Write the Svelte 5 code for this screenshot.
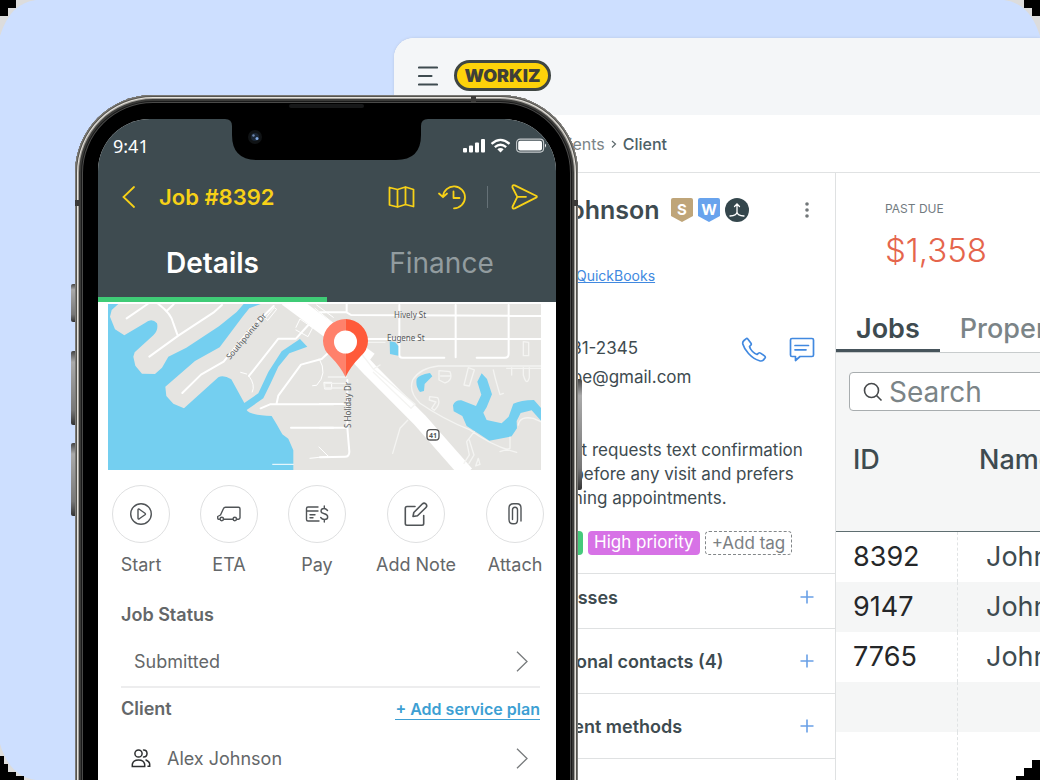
<script>
  const jobs = [
    { id: '8392', name: 'John Smith' },
    { id: '9147', name: 'John Smith' },
    { id: '7765', name: 'John Smith' },
    { id: '', name: '' },
    { id: '', name: '' }
  ];
  const sections = ['Addresses', 'Additional contacts (4)', 'Payment methods'];
  const actions = ['Start', 'ETA', 'Pay', 'Add Note', 'Attach'];
</script>

<div class="stage">
  <main class="window">
    <header class="topbar">
      <button class="plain" aria-label="Menu">
        <svg width="20" height="20" viewBox="0 0 20 20" fill="none" stroke="#3e4b50" stroke-width="2.1" stroke-linecap="round"><path d="M1 1.5H19M1 10H13.500M1 18.500H19" /></svg>
      </button>
      <span class="logo">WORKIZ</span>
    </header>
    <nav class="crumbs" aria-label="Breadcrumb">
      <a href="#clients">Clients</a>
      <svg width="6" height="10" viewBox="0 0 6 10" fill="none" stroke="#5d696d" stroke-width="1.2"><path d="M1 2L4.500 5L1 8.500" /></svg>
      <b>Client</b>
    </nav>
    <div class="columns">
      <section class="client">
        <div class="name">
          <h1>Johnson</h1>
          <svg width="78" height="24" viewBox="0 0 78 24">
            <path d="M2 0H20Q22 0 22 2V18L11 24L0 18V2Q0 0 2 0Z" fill="#bfa579" />
            <path d="M29 0H47Q49 0 49 2V18L38 24L27 18V2Q27 0 29 0Z" fill="#68a3ed" />
            <circle cx="66" cy="12" r="12" fill="#34464c" />
            <path d="M66 7V14Q66 17.500 59 18M66 14Q66 17.500 73 18M63.500 8.500L66 6L68.500 8.500" fill="none" stroke="#fff" stroke-width="1.3" stroke-linecap="round" />
            <text x="11" y="16.500" text-anchor="middle">S</text>
            <text x="38" y="16.500" text-anchor="middle">W</text>
          </svg>
          <button class="plain more" aria-label="More options">
            <svg width="6" height="16" viewBox="0 0 6 16" fill="#727779"><circle cx="3" cy="2" r="1.800" /><circle cx="3" cy="8" r="1.800" /><circle cx="3" cy="14" r="1.800" /></svg>
          </button>
        </div>
        <a class="books" href="#quickbooks">QuickBooks</a>
        <div class="contact">
          <div class="lines">
            <span>555 231-2345</span>
            <span class="mail">joe@gmail.com</span>
          </div>
          <button class="plain" aria-label="Call">
            <svg width="26" height="26" viewBox="0 0 26 26" fill="none" stroke="#4189e0" stroke-width="1.700" stroke-linejoin="round"><path d="M3 3.500L5 1.800Q6 1 7 2.200L10 6.300Q10.700 7.300 9.800 8.200L8.500 9.500Q9 12 11.500 14.500Q14 17 16 17.500L17.600 16.100Q18.500 15.400 19.500 16.100L23.500 18.900Q24.800 19.900 24 21L22.500 22.900Q21 24.500 18.500 23.800Q12.500 22 7.500 16.500Q3 11.500 1.800 7Q1.300 5 3 3.500Z" /></svg>
          </button>
          <button class="plain" aria-label="Message">
            <svg width="26" height="26" viewBox="0 0 26 26" fill="none" stroke="#4189e0" stroke-width="1.700" stroke-linejoin="round" stroke-linecap="round"><path d="M3 1.500H23Q24.500 1.500 24.500 3V18Q24.500 19.500 23 19.500H11L6.500 23.500V19.500H3Q1.500 19.500 1.500 18V3Q1.500 1.500 3 1.500ZM6 8.500H19.500M6 12.800H17" /></svg>
          </button>
        </div>
        <p class="note">Client requests text confirmation<br />call before any visit and prefers<br />morning appointments.</p>
        <div class="tags">
          <span class="tag green">VIP</span>
          <span class="tag pink">High priority</span>
          <button class="tag add">+Add tag</button>
        </div>
        {#each sections as title}
          <div class="fold">
            <h2>{title}</h2>
            <button class="plain" aria-label="Add to {title}">
              <svg width="14" height="14" viewBox="0 0 14 14" stroke="#69a0e6" stroke-width="1.600"><path d="M7 .5V13.500M.5 7H13.500" /></svg>
            </button>
          </div>
        {/each}
      </section>

      <section class="work">
        <div class="due">
          <small>PAST DUE</small>
          <span>$1,358</span>
        </div>
        <div class="tabs">
          <button class="on">Jobs</button>
          <button>Properties</button>
        </div>
        <div class="sheet">
          <label class="search">
            <svg width="20" height="20" viewBox="0 0 20 20" fill="none" stroke="#46494b" stroke-width="1.600"><circle cx="8.500" cy="8.500" r="7" /><path d="M13.500 13.500L18.500 18.500" /></svg>
            <input type="search" placeholder="Search" aria-label="Search jobs" />
          </label>
          <table>
            <thead><tr><th>ID</th><th>Name</th></tr></thead>
            <tbody>
              {#each jobs as job}
                <tr><td>{job.id}</td><td>{job.name}</td></tr>
              {/each}
            </tbody>
          </table>
        </div>
      </section>
    </div>
  </main>

  <div class="phone">
    <i class="key k1"></i><i class="key k2"></i><i class="key k3"></i><i class="key k4"></i>
    <i class="band b1"></i><i class="band b2"></i><i class="band b3"></i>
    <div class="shell">
      <i class="speaker"></i>
      <div class="screen">
        <svg class="notch" width="204" height="42" viewBox="0 0 204 42">
          <path d="M0 0Q7 0 7 7V16Q7 41 32 41H171Q196 41 196 16V7Q196 0 203 0Z" fill="#000" />
          <circle cx="30" cy="18" r="7" fill="#101315" />
          <circle cx="30" cy="18" r="4" fill="#1b2736" />
          <circle cx="28.500" cy="16.500" r="1.200" fill="#6c86ae" /><circle cx="32" cy="19.500" r="1.500" fill="#7fa6e0" />
        </svg>
        <div class="head">
          <div class="status">
            <span>9:41</span>
            <svg width="84" height="16" viewBox="0 0 84 16" fill="#fff">
              <rect x="0" y="10" width="4" height="4.500" rx="1" /><rect x="6" y="7.500" width="4" height="7" rx="1" /><rect x="12" y="4.500" width="4" height="10" rx="1" /><rect x="18" y="1" width="4" height="13.500" rx="1" />
              <g fill="none" stroke="#fff" stroke-width="2.300"><path d="M28.500 5.800Q37.500-2 46.500 5.800" /><path d="M31.800 9.200Q37.500 4.300 43.200 9.200" /></g>
              <path d="M34.300 11.200Q37.500 8.600 40.700 11.200L37.500 14.500Z" />
              <rect x="53.600" y="1.100" width="27" height="13" rx="3.500" fill="none" stroke="#c5cacc" stroke-width="1.100" />
              <rect x="55.200" y="2.700" width="23.800" height="9.800" rx="2" /><path d="M82 5.500Q84 7.500 82 9.700Z" />
            </svg>
          </div>
          <div class="title">
            <button class="plain" aria-label="Back"><svg width="13" height="22" viewBox="0 0 13 22" fill="none" stroke="#f7d117" stroke-width="1.800" stroke-linecap="round"><path d="M12 1L1.500 11L12 21" /></svg></button>
            <h1>Job #8392</h1>
            <button class="plain" aria-label="Map"><svg width="27" height="24" viewBox="0 0 27 24" fill="none" stroke="#f7d117" stroke-width="1.800" stroke-linejoin="round"><path d="M1.500 2.500L9.500 4.500V22L1.500 20ZM9.500 4.500L17.500 2V19.500L9.500 22M17.500 2L25.500 4.500V21.500L17.500 19.500" /></svg></button>
            <button class="plain" aria-label="History"><svg width="28" height="26" viewBox="0 0 28 26" fill="none" stroke="#f7d117" stroke-width="1.800" stroke-linecap="round" stroke-linejoin="round"><path d="M5 12.500A11 11 0 1 1 16 24.300M1 9.500L5 13.200L9 9.500M15.500 7.500V14H21.500" /></svg></button>
            <i class="bar"></i>
            <button class="plain" aria-label="Send"><svg width="27" height="26" viewBox="0 0 27 26" fill="none" stroke="#f7d117" stroke-width="1.800" stroke-linecap="round" stroke-linejoin="round"><path d="M1.500 3.500Q1 .5 3.800 1.400L25.500 12Q26.300 12.700 25.500 13.400L3.800 24.400Q1 25 1.600 22.500L6.300 12.800ZM6.300 12.800H15" /></svg></button>
          </div>
          <div class="ptabs"><button class="on">Details</button><button>Finance</button></div>
        </div>

        <svg class="map" viewBox="0 0 433 166" role="img" aria-label="Map of the job address">
          <rect width="433" height="166" fill="#e5e4e1" />
          <g transform="translate(-8 -9) scale(.3333)" fill="none" stroke="#fff" stroke-linecap="round" stroke-linejoin="round">
            <path stroke="none" fill="#74cff0" d="M24 27H55L35 45L30 65L45 103L73 121L135 84Q155 67 171 85Q176 105 160 121L104 172L100 185L106 212L126 236L165 237L186 218L205 185L259 158L357 94L410 51L431 27H482L448 40L427 66L359 157L285 198L196 275L199 303L220 326L252 340L355 247Q370 238 394 253L433 324L475 295L505 231L545 169L600 132L622 155L568 175L535 215L511 267L490 310L440 345Q446 360 515 363L530 388L547 418L565 431L580 466V527H24Z" />
            <path stroke-width="6" d="M80 70L143 27M175 27Q214 56 220 85L233 121M200 48L221 28M148 185L235 122L340 53L366 30M247 294L303 239L371 200L450 103L521 33M625 90L588 131H535L447 243M482 340L510 328H700M530 325L535 302L603 209L665 192L700 160M573 398H700" />
            <path stroke-width="3" d="M447 243Q467 270 457 291M440 237L422 232M518 508H580M630 490L685 484L657 456M658 192Q684 236 650 271L638 272M673 262H695V282H675ZM497 69L523 38L530 43L504 75ZM588 97L600 72L638 98L624 125L588 105M645 40L700 85M650 30L700 67" />
            <path stroke="#fff" stroke-width="47" stroke-linecap="butt" d="M560 10L810 195" />
          </g>
          <g transform="translate(212 -9) scale(.3333)" fill="none" stroke="#fff" stroke-linecap="round" stroke-linejoin="round">
            <path stroke-width="43" stroke-linecap="butt" d="M-20 75L75 145L150 225L300 376L440 535" />
            <path stroke-width="6" d="M80 27V52L93 60L663 63M90 132H663M238 30V180Q238 188 247 188H373M407 30V187M566 30V177Q566 188 555 188H470M0 52H80M0 327H80M0 398H82M82 255V398L88 470Q88 485 75 485L0 487" />
            <path stroke-width="4" stroke="#f4f4f2" d="M663 213H355Q300 219 278 255Q265 290 300 325Q370 373 450 405Q520 455 590 472M663 220H560M103 149L160 222L285 328L273 340L160 232M160 222L180 210M100 142H195M445 218L432 270L448 273L463 225ZM520 225Q525 250 540 299L550 295M575 218V240M610 218V240Q620 275 628 248V218M610 140V182H626V142ZM357 227L390 230Q400 255 375 264L357 255ZM362 243H390M329 305L353 308Q364 325 343 346L335 340L348 321L328 315ZM263 376L240 400L218 475M570 425V460L540 470M595 390Q600 362 640 370L663 380M463 410L440 440L448 480L432 505M448 435L462 480L447 505M475 490L467 513L480 508ZM14 265H80V279H14ZM25 246H80" />
            <path stroke="none" fill="#74cff0" d="M209 139L226 142L235 153V182L210 177ZM290 252Q296 240 330 234L337 244L314 267L312 288L300 291Q286 275 290 252ZM399 331Q405 315 424 316L468 333L484 299L472 260L485 235L501 252L516 298L500 337L490 353L500 375L545 385L566 365L580 326Q602 316 642 315L663 339V377L635 346L602 354L590 378L591 400L575 424L508 437L482 420L440 393L427 363L401 349Z" />
            <rect x="321" y="404" width="36" height="31" rx="10" fill="#fff" stroke="#555" stroke-width="4" />
          </g>
          <g font-family="'Noto Sans', sans-serif" font-size="8" fill="#55585a">
            <text x="286" y="14">Hively St</text><text x="279" y="37">Eugene St</text>
            <text transform="translate(122 56) rotate(-50)">Southpointe Dr</text>
            <text transform="translate(243 124) rotate(-90)">S Holiday Dr</text>
            <text x="325" y="134" font-size="7" font-weight="700" text-anchor="middle">41</text>
          </g>
          <path d="M237.500 15V73Q232 62 223 53Q215 46 215 37A22.500 22.500 0 0 1 237.500 15Z" fill="#ff816b" />
          <path d="M237.500 15A22.500 22.500 0 0 1 260 37Q260 46 252 53Q243 62 237.500 73Z" fill="#ff5a3a" />
          <circle cx="237.500" cy="38" r="11.500" fill="#fff" />
        </svg>

        <div class="actions">
          {#each actions as label, i}
            <button>
              <span class="ring">
                <svg width="26" height="26" viewBox="0 0 26 26" fill="none" stroke="#505457" stroke-width="1.400" stroke-linejoin="round" stroke-linecap="round">
                  {#if i === 0}
                    <circle cx="13" cy="13" r="10.300" /><path d="M10 9Q10 7.500 11.300 8.200L17 12.200Q18 13 17 13.800L11.300 17.800Q10 18.500 10 17Z" />
                  {:else if i === 1}
                    <path d="M3.500 18.200H2.500Q1.700 18.200 1.700 17.200V15.500L4.500 14L7.500 7.500Q8 6.300 9.500 6.300H22.500Q24 6.300 24 7.800V16.800Q24 18.200 22.500 18.200H21M7.500 18.200H17" /><circle cx="5.800" cy="18" r="1.700" /><circle cx="18.800" cy="18" r="1.700" />
                  {:else if i === 2}
                    <path d="M14 6H4Q2.500 6 2.500 7.500V18.500Q2.500 20 4 20H15M2.500 10H14M6 13.800H11M6 16.800H9M23.500 9.500Q22 7.500 20 7.500Q17 7.500 17 10Q17 12 20.300 12.700Q23.700 13.400 23.700 16Q23.700 18.500 20.500 18.500Q18 18.500 16.700 16.500M20.300 5V7.500M20.300 18.500V21" />
                  {:else if i === 3}
                    <path stroke-width="1.600" d="M12 5.500H4Q2.300 5.500 2.300 7.200V22.500Q2.300 24.200 4 24.200H19Q20.700 24.200 20.700 22.500V14.500M10 15.500L10.800 11.500L19.500 2.800Q21 1.400 23 3Q24.500 5 23 6.500L14.500 14.800Z" />
                  {:else}
                    <path d="M19 20V7Q19 2.700 15 2.700H11.500Q7 2.700 7 7V18.500Q7 22.800 11 22.800H12Q15.500 22.800 15.500 19V9Q15.500 6.200 13 6.200Q10.500 6.200 10.500 9V18.500" />
                  {/if}
                </svg>
              </span>
              {label}
            </button>
          {/each}
        </div>

        <div class="details">
          <h2>Job Status</h2>
          <button class="entry"><span>Submitted</span><svg width="12" height="21" viewBox="0 0 12 21" fill="none" stroke="#777a7c" stroke-width="1.300"><path d="M1 .8L11 10.500L1 20.200" /></svg></button>
          <div class="pair"><h2>Client</h2><a href="#plan">+ Add service plan</a></div>
          <button class="entry person">
            <svg width="20" height="20" viewBox="0 0 20 20" fill="none" stroke="#2d2f30" stroke-width="1.500" stroke-linecap="round"><circle cx="7.500" cy="5.500" r="3.600" /><path d="M1.300 18.500V16.500Q2 12 7.500 12Q13 12 13.700 16.500V18.500ZM12.500 2Q16 2 16 5.500Q16 9 12.500 9M15 12Q18.700 13.500 18.700 16.500V18.300H17" /></svg>
            <span>Alex Johnson</span>
            <svg width="12" height="21" viewBox="0 0 12 21" fill="none" stroke="#777a7c" stroke-width="1.300"><path d="M1 .8L11 10.500L1 20.200" /></svg>
          </button>
        </div>
      </div>
    </div>
  </div>

  <svg class="corner tl" width="36" height="36" viewBox="0 0 36 36"><path d="M0 0H36Q10 3 0 36Z" fill="#dcdcdc" /><path d="M0 0H16V8H8V16H0Z" fill="#000" /></svg>
  <svg class="corner tr" width="36" height="36" viewBox="0 0 36 36"><path d="M0 0H36Q10 3 0 36Z" fill="#dcdcdc" /><path d="M0 0H16V8H8V16H0Z" fill="#000" /></svg>
  <svg class="corner bl" width="36" height="36" viewBox="0 0 36 36"><path d="M0 0H36Q10 3 0 36Z" fill="#dcdcdc" /><path d="M0 0H24V4H16V8H8V16H4V24H0Z" fill="#000" /></svg>
  <svg class="corner br" width="24" height="20" viewBox="0 0 24 20"><path d="M0 0H24V4H16V12H8V20H0Z" fill="#000" /></svg>
</div>

<style>
  :global(body) { margin: 0; }
  .stage, .stage * { box-sizing: border-box; }
  .stage { position: relative; height: 100vh; overflow: hidden; padding: 38px 0 0 394px; background: #cddfff; font-family: Inter, sans-serif; color: #3e4b50; }
  button { font: inherit; color: inherit; background: none; border: 0; padding: 0; }
  .plain { display: flex; }
  svg { flex: none; display: block; }
  h1, h2, p { margin: 0; }

  .window { display: flex; flex-direction: column; min-height: 100%; background: #fff; border-radius: 20px 0 0 0; overflow: hidden; box-shadow: 0 0 3px #b8c6df; }
  .topbar { display: flex; align-items: center; gap: 16px; height: 77px; padding: 0 24px 2px; background: #f4f6f8; }
  .logo { display: grid; place-items: center; width: 97px; height: 31px; border: 3px solid #3f4643; border-radius: 16px; background: #fdd20a; color: #3f4038; font-weight: 900; font-size: 18px; }
  .crumbs { display: flex; align-items: center; gap: 6px; height: 58px; padding-left: 159px; border-bottom: 1px solid #e0e2e3; font-size: 16px; }
  .crumbs a { color: #7b8487; text-decoration: none; }
  .crumbs b { font-weight: 500; color: #4d6066; }
  .columns { display: flex; flex: 1; white-space: nowrap; }

  .client { flex: 0 0 442px; border-right: 1px solid #dfe1e2; }
  .name { display: flex; align-items: center; gap: 11px; height: 74px; padding: 0 25px 0 161px; }
  .name h1 { font-size: 25px; font-weight: 600; }
  .name text { font-size: 15px; font-weight: 700; fill: #fff; }
  .more { margin-left: auto; }
  .books { display: block; padding-left: 182px; font-size: 14px; line-height: 58px; color: #4189e0; }
  .contact { display: flex; align-items: center; gap: 22px; height: 90px; padding: 0 20px 0 131px; font-size: 17px; }
  .lines { display: flex; flex-direction: column; flex: 1; padding-top: 26px; line-height: 29px; }
  .mail { padding-left: 43px; }
  .note { padding: 43px 0 21px 147px; font-size: 17px; line-height: 24px; }
  .tags { display: flex; gap: 5px; padding-left: 140px; height: 42px; }
  .tag { height: 24px; line-height: 22px; padding: 0 6px; border-radius: 4px; font-size: 17px; color: #fff; }
  .green { width: 49px; background: #46ca7b; }
  .pink { background: #d772e6; }
  .add { border: 1px dashed #838789; color: #7b8083; line-height: 20px; }
  .fold { display: flex; align-items: center; justify-content: space-between; height: 65px; padding: 0 21px 0 131px; border-bottom: 1px solid #dfe1e2; }
  .tags + .fold { height: 56px; padding-bottom: 8px; border-top: 1px solid #dfe1e2; }
  .fold h2 { font-size: 18px; font-weight: 600; }

  .work { display: flex; flex-direction: column; flex: 1; min-width: 0; overflow: hidden; }
  .due { display: flex; flex-direction: column; height: 132px; padding: 27px 0 0 49px; }
  .due small { font-size: 12px; line-height: 18px; color: #727b7f; }
  .due span { margin-top: 12px; font-size: 33px; font-weight: 300; line-height: 40px; color: #e5654c; }
  .tabs { display: flex; height: 48px; border-bottom: 1px solid #c8cccd; }
  .tabs button { flex: none; padding: 0 20px; font-size: 27px; font-weight: 500; color: #7b8487; }
  .tabs .on { font-weight: 600; color: #3e4b50; box-shadow: inset 0 -3px #46545b; }
  .sheet { display: flex; flex-direction: column; flex: 1; padding-top: 19px; background: #f5f6f6; }
  .search { display: flex; align-items: center; gap: 6px; flex: none; height: 39px; margin: 0 -8px 0 13px; padding: 0 13px; background: #fff; border: 1px solid #a8adaf; border-radius: 4px; }
  .search input { flex: 1; min-width: 0; border: 0; padding: 0; background: none; font: 28px/36px Inter, sans-serif; color: #7b8487; outline: 0; }
  .search input::placeholder { color: #7b8487; opacity: 1; }
  table { flex: none; border-collapse: separate; border-spacing: 0; table-layout: fixed; width: 260px; text-align: left; font-size: 27px; }
  th { height: 121px; padding: 0 0 24px 17px; font-weight: 500; border-bottom: 1px solid #5f6e71; }
  th + th { padding-left: 21px; }
  th:first-child { width: 122px; }
  td { height: 50px; padding: 0 0 2px 17px; background: #fff; border-right: 1px dashed #e0e3e4; }
  td:first-child { color: #252729; }
  td + td { padding-left: 28px; }
  tbody tr:nth-child(even) td { background: #f5f6f6; }
  tbody tr:last-child td { height: 90px; }

  .phone { position: absolute; left: 75px; top: 95px; bottom: -16px; width: 503px; }
  .shell { position: relative; height: 100%; padding: 24px 22px 0 23px; border-radius: 78px 78px 0 0; background: #000; box-shadow: inset 0 0 0 1px #7b7a77, inset 0 0 0 2px #55544f, inset 0 0 0 3px #e6e3dd, inset 0 0 0 4px #a09e99, inset 0 0 0 6px #3b3b39, inset 0 0 0 7px #1a1a1a, inset 0 0 0 8px #4a4a49; }
  .speaker { position: absolute; left: 214px; right: 214px; top: 9px; height: 4px; border-radius: 2px; background: #171819; }
  .key { position: absolute; left: -4px; width: 5px; border-radius: 2px 0 0 2px; background: linear-gradient(#444, #aaa 15%, #777 80%, #333); }
  .k1 { top: 189px; height: 38px; }
  .k2 { top: 256px; height: 74px; }
  .k3 { top: 348px; height: 73px; }
  .k4 { left: auto; right: -4px; top: 284px; height: 111px; border-radius: 0 2px 2px 0; }
  .band { position: absolute; z-index: 1; width: 5px; height: 6px; background: #3b3a38; }
  .b1 { left: 0; top: 105px; }
  .b2 { right: 0; top: 105px; }
  .b3 { right: 102px; top: 1px; }
  .screen { position: relative; height: 100%; overflow: hidden; background: #fff; border-radius: 52px 52px 0 0; color: #646769; white-space: nowrap; }
  .notch { position: absolute; left: 127px; top: 0; }
  .head { height: 183px; background: #3e4b50; }
  .status { display: flex; align-items: center; justify-content: space-between; height: 54px; padding: 0 9px 0 15px; color: #fff; font: 18px "Noto Sans", sans-serif; }
  .title { display: flex; align-items: center; height: 48px; padding: 0 18px 0 24px; }
  .title h1 { flex: 1; padding-left: 24px; font-size: 22px; font-weight: 600; color: #f7d117; }
  .title button + button { margin-left: 23px; }
  .bar { width: 1px; height: 22px; margin: 0 23px 0 21px; background: #657177; }
  .ptabs { display: flex; height: 81px; }
  .ptabs button { flex: 1 1 0; padding-top: 2px; font-size: 28px; color: #929c9f; }
  .ptabs .on { font-weight: 600; color: #fff; padding-top: 7px; border-bottom: 5px solid #3fcb76; }
  .map { width: calc(100% - 25px); margin: 2px 15px 0 10px; }
  .actions { display: flex; gap: 30px; padding: 15px 0 0 14px; font-size: 18px; }
  .actions button { flex: none; display: flex; flex-direction: column; align-items: center; gap: 10px; min-width: 58px; line-height: 24px; }
  .ring { display: grid; place-items: center; width: 58px; height: 58px; border: 1px solid #dfe0e1; border-radius: 50%; }
  .details { padding: 26px 16px 0 23px; }
  .details h2 { font-size: 18px; line-height: 24px; font-weight: 600; }
  .entry { display: flex; align-items: center; justify-content: space-between; width: 100%; height: 61px; padding: 10px 12px 0 13px; border-bottom: 2px solid #ededee; font-size: 18px; }
  .pair { display: flex; align-items: center; justify-content: space-between; height: 42px; }
  .pair a { border-bottom: 1px solid #3d9fd3; color: #3d9fd3; font-size: 16px; line-height: 20px; font-weight: 600; text-decoration: none; }
  .person { gap: 16px; height: 56px; padding-top: 0; padding-left: 10px; border: 0; }
  .person span { flex: 1; text-align: left; }

  .corner { position: absolute; }
  .tl { left: 0; top: 0; }
  .tr { right: 0; top: 0; transform: scaleX(-1); }
  .bl { left: 0; bottom: 0; transform: scaleY(-1); }
  .br { right: 0; bottom: 0; transform: scale(-1); }
</style>
